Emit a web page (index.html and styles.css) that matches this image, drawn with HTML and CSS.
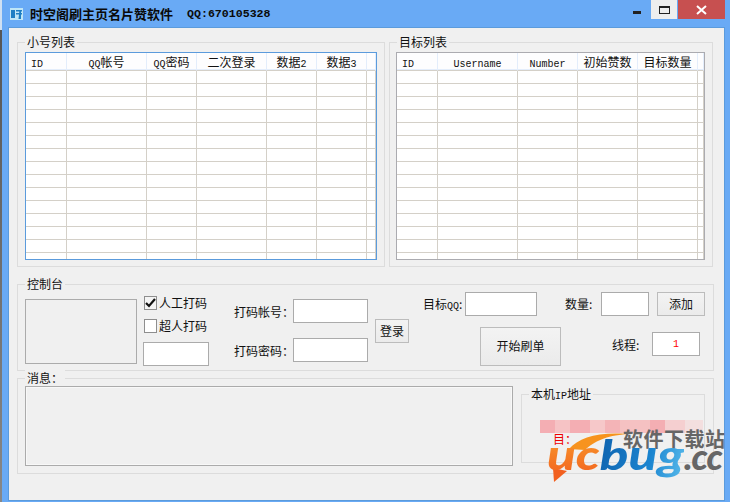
FILE: index.html
```html
<!DOCTYPE html>
<html lang="zh-CN">
<head>
  <meta charset="UTF-8" />
  <title>时空阁刷主页名片赞软件</title>
  <link rel="stylesheet" href="styles.css">
</head>
<body>
  <div class="window">
    <div class="titlebar">
      <svg class="app-icon" width="14" height="14" viewBox="0 0 14 14">
        <rect x="0" y="1" width="13" height="12" fill="#bfe6f7"/>
        <path d="M1 3h4v8H1zM6 3h6v1.5H6zM6 6h6v1.5H6zM9.5 3h1.5v9H8.5" fill="#1f7fc4"/>
      </svg>
      <span class="title-text">时空阁刷主页名片赞软件</span>
      <span class="title-qq">QQ:670105328</span>
      <div class="controls">
        <span class="min-btn"></span>
        <span class="max-btn"><i></i></span>
        <span class="close-btn">
          <svg width="11" height="10" viewBox="0 0 11 10"><path d="M1 1l9 8M10 1l-9 8" stroke="#fff" stroke-width="2" fill="none"/></svg>
        </span>
      </div>
    </div>

    <div class="client">
      <div class="top-row">
        <div class="group list-left">
          <span class="legend">小号列表</span>
          <div class="grid-wrap wrap-focus">
            <table class="grid">
              <colgroup><col class="c41"><col class="c80"><col class="c50"><col class="c70"><col class="c50"><col class="c50"><col></colgroup>
              <tr><th class="left"><span class="mono">ID</span></th><th><span class="mono">QQ</span>帐号</th><th><span class="mono">QQ</span>密码</th><th>二次登录</th><th>数据<span class="mono">2</span></th><th>数据<span class="mono">3</span></th><th></th></tr>
              <tr><td></td><td></td><td></td><td></td><td></td><td></td><td></td></tr>
              <tr><td></td><td></td><td></td><td></td><td></td><td></td><td></td></tr>
              <tr><td></td><td></td><td></td><td></td><td></td><td></td><td></td></tr>
              <tr><td></td><td></td><td></td><td></td><td></td><td></td><td></td></tr>
              <tr><td></td><td></td><td></td><td></td><td></td><td></td><td></td></tr>
              <tr><td></td><td></td><td></td><td></td><td></td><td></td><td></td></tr>
              <tr><td></td><td></td><td></td><td></td><td></td><td></td><td></td></tr>
              <tr><td></td><td></td><td></td><td></td><td></td><td></td><td></td></tr>
              <tr><td></td><td></td><td></td><td></td><td></td><td></td><td></td></tr>
              <tr><td></td><td></td><td></td><td></td><td></td><td></td><td></td></tr>
              <tr><td></td><td></td><td></td><td></td><td></td><td></td><td></td></tr>
              <tr><td></td><td></td><td></td><td></td><td></td><td></td><td></td></tr>
              <tr><td></td><td></td><td></td><td></td><td></td><td></td><td></td></tr>
              <tr><td></td><td></td><td></td><td></td><td></td><td></td><td></td></tr>
              <tr><td></td><td></td><td></td><td></td><td></td><td></td><td></td></tr>
            </table>
          </div>
        </div>
        <div class="group list-right">
          <span class="legend">目标列表</span>
          <div class="grid-wrap">
            <table class="grid">
              <colgroup><col class="c41"><col class="c80"><col class="c60"><col class="c60"><col class="c60"><col></colgroup>
              <tr><th class="left"><span class="mono">ID</span></th><th><span class="mono">Username</span></th><th><span class="mono">Number</span></th><th>初始赞数</th><th>目标数量</th><th></th></tr>
              <tr><td></td><td></td><td></td><td></td><td></td><td></td></tr>
              <tr><td></td><td></td><td></td><td></td><td></td><td></td></tr>
              <tr><td></td><td></td><td></td><td></td><td></td><td></td></tr>
              <tr><td></td><td></td><td></td><td></td><td></td><td></td></tr>
              <tr><td></td><td></td><td></td><td></td><td></td><td></td></tr>
              <tr><td></td><td></td><td></td><td></td><td></td><td></td></tr>
              <tr><td></td><td></td><td></td><td></td><td></td><td></td></tr>
              <tr><td></td><td></td><td></td><td></td><td></td><td></td></tr>
              <tr><td></td><td></td><td></td><td></td><td></td><td></td></tr>
              <tr><td></td><td></td><td></td><td></td><td></td><td></td></tr>
              <tr><td></td><td></td><td></td><td></td><td></td><td></td></tr>
              <tr><td></td><td></td><td></td><td></td><td></td><td></td></tr>
              <tr><td></td><td></td><td></td><td></td><td></td><td></td></tr>
              <tr><td></td><td></td><td></td><td></td><td></td><td></td></tr>
              <tr><td></td><td></td><td></td><td></td><td></td><td></td></tr>
            </table>
          </div>
        </div>
      </div>

      <div class="group console">
        <span class="legend">控制台</span>
        <div class="captcha"></div>
        <div class="checks">
          <label class="check-row">
            <span class="box box-on">
              <svg width="11" height="10" viewBox="0 0 11 10"><path d="M1 5l3 3 6-7" stroke="#111" stroke-width="2.2" fill="none"/></svg>
            </span>人工打码
          </label>
          <label class="check-row"><span class="box"></span>超人打码</label>
          <input class="field field-code" type="text">
        </div>
        <div class="account">
          <div class="account-row"><label class="account-label">打码帐号：</label><input class="field field-account" type="text"></div>
          <div class="account-row"><label class="account-label">打码密码：</label><input class="field field-account" type="text"></div>
        </div>
        <button class="btn btn-login">登录</button>
        <div class="targets">
          <div class="target-row">
            <label class="label-qq">目标<span class="mono">QQ</span>:</label>
            <input class="field field-qq" type="text">
            <label class="label-count">数量:</label>
            <input class="field field-count" type="text">
            <button class="btn btn-add">添加</button>
          </div>
          <div class="start-row">
            <button class="btn btn-start">开始刷单</button>
            <label class="label-thread">线程:</label>
            <input class="field field-thread" type="text" value="1">
          </div>
        </div>
      </div>

      <div class="group messages">
        <span class="legend">消息：</span>
        <div class="msg-box"></div>
        <div class="group ip-box">
          <span class="legend">本机<span class="mono">IP</span>地址</span>
          <div class="mosaic"></div>
          <div class="ip-text">目：</div>
        </div>
      </div>
    </div>
  </div>

  <div class="watermark">
    <svg class="wm-art" width="90" height="52" viewBox="0 0 90 52">
      <path d="M24 19C34 8 52 2 82 4 60 6 50 11 40 20z" fill="#f7931e"/>
      <path d="M8 38l14 3-13 11z" fill="#f2601f"/>
    </svg>
    <span class="wm-cn">软件下载站</span>
    <div class="wm-logo">
      <span class="wm-mark"><span class="wm-uc">uc</span><span class="wm-bug">bug</span></span>
      <span class="wm-cc">.cc</span>
    </div>
  </div>
</body>
</html>
```

FILE: styles.css
```css
* {
  box-sizing: border-box;
}
body {
  margin: 0;
  width: 730px;
  height: 502px;
  overflow: hidden;
  position: relative;
  font-family: "Noto Sans CJK SC", "Liberation Sans", sans-serif;
  font-size: 12px;
  color: #111;
  background: linear-gradient(#cfe0f2 0, #cfe0f2 30px, #555 30px, #888 100%);
}
.mono {
  font-family: "Liberation Mono", monospace;
  font-size: 10px;
}
.window {
  margin-left: 2px;
  height: 502px;
  background: #69aaf5;
  padding: 0 5px 1px 6px;
  display: flex;
  flex-direction: column;
}

/* title bar */
.titlebar {
  height: 27px;
  display: flex;
  align-items: center;
  padding-left: 2px;
  flex-shrink: 0;
}
.app-icon {
  margin-top: 1px;
}
.title-text {
  margin-left: 6px;
  font-size: 13px;
  font-weight: 700;
  color: #0a0a0a;
}
.title-qq {
  margin-left: 14px;
  font-family: "Liberation Mono", monospace;
  font-size: 11.6px;
  font-weight: 700;
  color: #0a0a0a;
}
.controls {
  margin-left: auto;
  align-self: flex-start;
  display: flex;
}
.min-btn {
  width: 8px;
  height: 3px;
  margin: 11px 10px 0 0;
  background: #222;
}
.max-btn {
  width: 26px;
  height: 19px;
  background: #eeeeee;
  display: flex;
  justify-content: center;
  align-items: center;
}
.max-btn i {
  width: 11px;
  height: 8px;
  border: 1px solid #222;
  border-top-width: 2px;
}
.close-btn {
  width: 47px;
  height: 19px;
  margin-left: 1px;
  background: #c75050;
  display: flex;
  justify-content: center;
  align-items: center;
}

/* client area */
.client {
  flex: 1;
  background: #f0f0f0;
  border: 1px solid #5b9bdc;
  padding: 14px 10px 0 8px;
}
.top-row {
  display: flex;
  gap: 4px;
}
.group {
  position: relative;
  border: 1px solid #dcdcdc;
}
.legend {
  position: absolute;
  top: -9px;
  left: 7px;
  padding: 0 2px;
  background: #f0f0f0;
  line-height: 16px;
  white-space: nowrap;
}
.list-left {
  width: 368px;
  height: 225px;
  padding: 9px 0 0 7px;
}
.list-right {
  width: 324px;
  height: 225px;
  padding: 9px 0 0 6px;
}
.grid-wrap {
  width: 309px;
  height: 208px;
  border: 1px solid #ababb0;
  overflow: hidden;
  background: #fff;
}
.wrap-focus {
  width: 352px;
  border-color: #5b9bdc;
}
.grid {
  width: 100%;
  table-layout: fixed;
  border-collapse: separate;
  border-spacing: 0;
}
.c41 { width: 41px; }
.c50 { width: 50px; }
.c60 { width: 60px; }
.c70 { width: 70px; }
.c80 { width: 80px; }
.grid th {
  height: 18px;
  padding: 0;
  font-weight: 400;
  line-height: 16px;
  background: #fdfdfe;
  border-right: 1px solid #e3edfb;
  border-bottom: 1px solid #d4d0c8;
  box-shadow: inset 0 -1px 0 #e3edfb;
  white-space: nowrap;
}
.grid th .mono {
  line-height: 1;
}
.grid th.left {
  text-align: left;
  padding-left: 5px;
}
.grid td {
  height: 13px;
  padding: 0;
  border-right: 1px solid #d4d0c8;
  border-bottom: 1px solid #d4d0c8;
}

/* console */
.console {
  height: 87px;
  margin-top: 17px;
  padding-left: 7px;
  display: flex;
  align-items: flex-start;
}
.captcha {
  width: 112px;
  height: 65px;
  margin-top: 14px;
  border: 1px solid #ababab;
}
.checks {
  width: 66px;
  margin: 11px 0 0 6px;
  display: flex;
  flex-direction: column;
  align-items: flex-start;
}
.check-row {
  display: flex;
  align-items: center;
  height: 14px;
  margin: 0 0 9px 1px;
  line-height: 12px;
  white-space: nowrap;
}
.box {
  width: 13px;
  height: 14px;
  margin-right: 2px;
  border: 1px solid #8e8e8e;
  background: #fff;
  display: flex;
  align-items: center;
  justify-content: center;
}
.box-on {
  background: #f4f4f4;
}
.field {
  height: 24px;
  padding: 0;
  border: 1px solid #ababab;
  background: #fff;
  outline: none;
}
.field-code {
  width: 66px;
}
.account {
  width: 134px;
  margin: 14px 0 0 25px;
  display: flex;
  flex-direction: column;
  gap: 15px;
}
.account-row {
  display: flex;
  align-items: center;
}
.account-label {
  width: 59px;
  white-space: nowrap;
}
.field-account {
  width: 75px;
}
.btn {
  padding: 0 0 2px;
  font-family: inherit;
  font-size: 12px;
  color: #111;
  border: 1px solid #bcbcbc;
  background: linear-gradient(#f3f3f3, #ebebeb);
}
.btn-login {
  width: 34px;
  height: 24px;
  margin: 34px 0 0 7px;
}
.targets {
  width: 282px;
  margin: 7px 0 0 14px;
}
.target-row,
.start-row {
  display: flex;
  align-items: center;
}
.label-qq {
  width: 42px;
  margin-top: -2px;
  white-space: nowrap;
}
.field-qq {
  width: 72px;
}
.label-count {
  width: 36px;
  margin: -2px 0 0 28px;
}
.field-count {
  width: 48px;
}
.btn-add {
  width: 48px;
  height: 24px;
  margin-left: 8px;
}
.start-row {
  margin-top: 11px;
  align-items: flex-start;
}
.btn-start {
  width: 81px;
  height: 39px;
  margin-left: 57px;
}
.label-thread {
  width: 40px;
  margin: 9px 0 0 51px;
}
.field-thread {
  width: 48px;
  margin-top: 5px;
  text-align: center;
  color: #f00;
  font-family: "Liberation Mono", monospace;
  font-size: 10px;
}

/* messages */
.messages {
  height: 96px;
  margin-top: 7px;
  padding: 7px 0 0 7px;
  display: flex;
  align-items: flex-start;
}
.msg-box {
  width: 488px;
  height: 80px;
  border: 1px solid #ababab;
  box-shadow: inset 0 0 0 1px #f8f8f8;
}
.ip-box {
  width: 184px;
  height: 69px;
  margin: 8px 0 0 8px;
  padding: 25px 0 0 18px;
}
.mosaic {
  width: 163px;
  height: 13px;
  background: linear-gradient(90deg, #f4aeb3 0 15px, #f6c3c5 15px 30px, #f4aeb3 30px 50px, #f6c8c9 50px 65px, #f4b4b7 65px 80px, #f5c1c2 80px 110px, #f4aeb3 110px 125px, #f5cfd0 125px 145px, #f3dfdf 145px 163px);
}
.ip-text {
  margin: -1px 0 0 13px;
  color: #ee0000;
  line-height: 14px;
  white-space: nowrap;
}

/* site watermark over the window corner */
.watermark {
  position: absolute;
  left: 545px;
  top: 430px;
  width: 185px;
  height: 60px;
}
.wm-art {
  position: absolute;
  left: 0;
  top: 0;
}
.wm-cn {
  position: absolute;
  left: 78px;
  top: -1px;
  font-size: 20px;
  line-height: 20px;
  letter-spacing: 0.5px;
  font-weight: 700;
  color: #666;
  white-space: nowrap;
}
.wm-logo {
  position: absolute;
  left: 2px;
  top: 6px;
  width: 180px;
  display: flex;
  align-items: baseline;
  font-family: Lato, "Liberation Sans", sans-serif;
  font-style: italic;
  font-weight: 900;
  font-size: 42px;
  line-height: 36px;
  white-space: nowrap;
}
.wm-mark {
  display: inline-block;
  width: 137px;
  transform: scaleX(1.26);
  transform-origin: left;
}
.wm-uc {
  color: transparent;
  background: linear-gradient(#f9a12e, #f2601f);
  -webkit-background-clip: text;
  background-clip: text;
}
.wm-bug {
  color: transparent;
  background: linear-gradient(100deg, #0f62ae, #1b85d0 60%, #5abcec);
  -webkit-background-clip: text;
  background-clip: text;
}
.wm-cc {
  font-size: 36px;
  letter-spacing: -1px;
  color: #666;
}
```
